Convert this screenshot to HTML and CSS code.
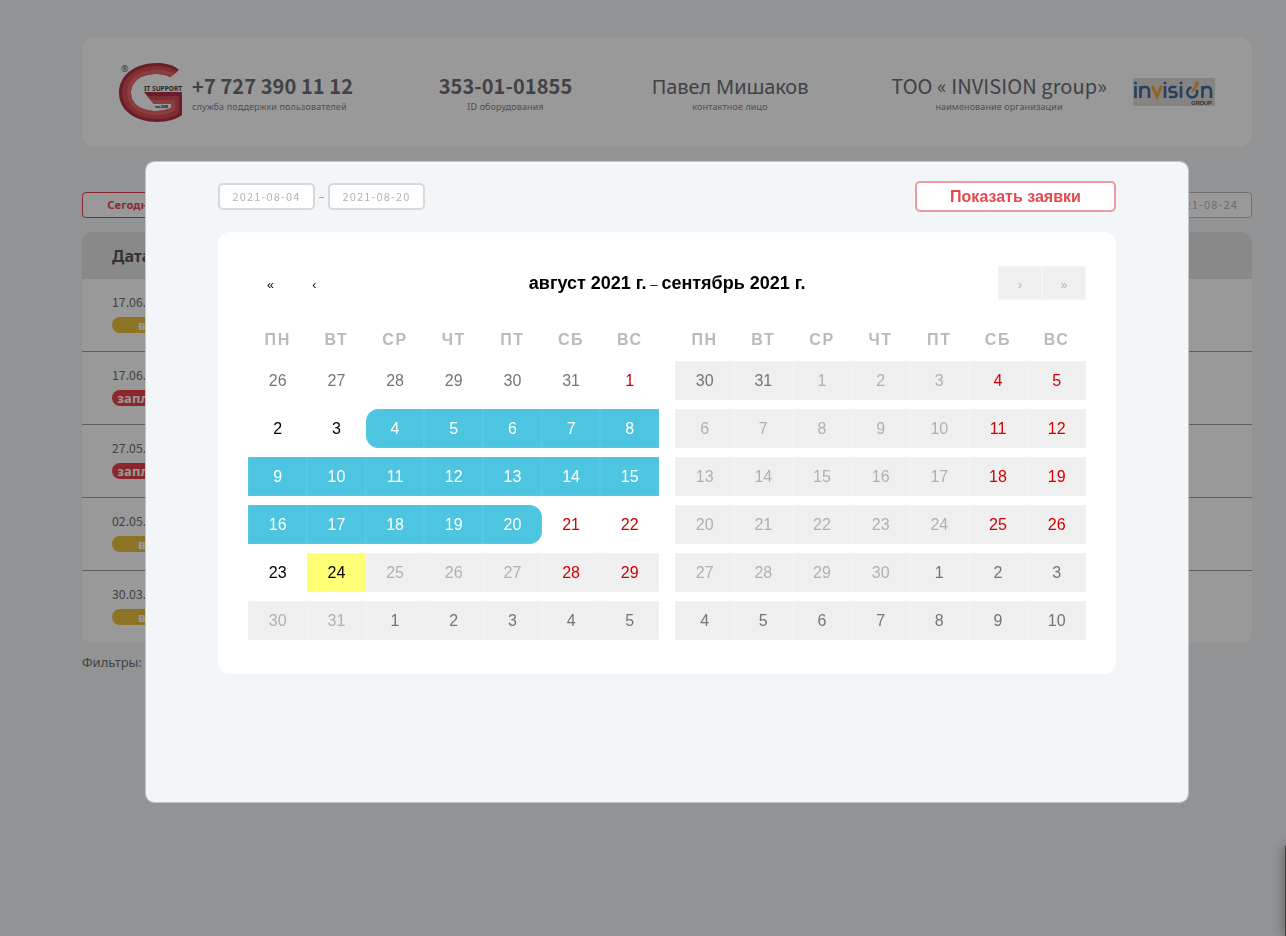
FILE: index.html
```html
<!DOCTYPE html>
<html lang="ru">
<head>
<meta charset="utf-8">
<title>IT Support</title>
<link rel="stylesheet" href="styles.css">
</head>
<body>
<div class="page">
  <header class="top">
    <svg class="logo" viewBox="0 0 65 61" width="65" height="61">
      <path fill="#b22f43" d="M61 8C56 3 48 1 39 1C17 1 1 13 1 31C1 48 17 60 39 60C50 60 59 57 64 53V30H26L36 42H53V46C49 48 44 49 39 49C23 49 13 42 13 31C13 19 23 12 39 12C44 12 49 13 52 15Z"/>
      <path fill="#d05057" d="M59 10C54 6 47 4 39 4C19 4 4 15 4 31C4 46 19 57 39 57C48 57 56 55 61 51V34H29L36 42H53V46C49 48 44 49 39 49C23 49 13 42 13 31C13 19 23 12 39 12C44 12 49 13 52 15Z"/>
      <path fill="#e8666b" d="M57 12C52 9 46 8 39 8C21 8 9 17 9 31C9 44 21 53 39 53C46 53 53 51 57 48V38H33L36 42H53V46C49 48 44 49 39 49C23 49 13 42 13 31C13 19 23 12 39 12C44 12 49 13 52 15Z"/>
      <text class="logo-name" x="26" y="28.500" textLength="38" lengthAdjust="spacingAndGlyphs">IT SUPPORT</text>
      <text class="logo-est" x="37" y="46" textLength="13">est. 2008</text>
      <text class="logo-reg" x="3" y="9.500">®</text>
    </svg>
    <div class="info phone"><b class="value">+7 727 390 11 12</b><small>служба поддержки пользователей</small></div>
    <div class="info device"><b class="value">353-01-01855</b><small>ID оборудования</small></div>
    <div class="info person"><span class="value">Павел Мишаков</span><small>контактное лицо</small></div>
    <div class="info org"><span class="value">ТОО « INVISION group»</span><small>наименование организации</small></div>
    <svg class="brand" viewBox="0 0 82 28" width="82" height="28">
      <rect width="82" height="28" fill="#e0dcd9"/>
      <g fill="none" stroke="#3e6ba6" stroke-width="2.600">
        <path d="M2.500 8V20M7.500 20V8M7.500 13Q7.500 9 12 9Q16 9 16 13V20M32 8V20M43.500 9H39Q36.500 9 36.500 11.500Q36.500 14 39 14H41Q43.500 14 43.500 16.500Q43.500 19 41 19H36M48 8V20M58.500 9.500A5 5 0 1 0 63.500 12M69.500 20V8M69.500 13Q69.500 9 74 9Q78 9 78 13V20"/>
      </g>
      <path d="M19.500 8L24 18.500L28.500 8" fill="none" stroke="#f0a33c" stroke-width="3"/>
      <path d="M59 14L64 7" stroke="#f0a33c" stroke-width="2.500"/>
      <circle cx="64" cy="5.500" r="2" fill="#f0a33c"/>
      <circle cx="2.500" cy="5" r="1.500" fill="#3e6ba6"/><circle cx="32" cy="5" r="1.500" fill="#3e6ba6"/><circle cx="48" cy="5" r="1.500" fill="#3e6ba6"/>
      <text class="brand-group" x="58" y="27" textLength="21">GROUP</text>
    </svg>
  </header>
  <div class="toolbar"><span class="btn-today">Сегодня</span><span class="date-box">2021-08-24</span></div>
  <section class="orders">
    <div class="orders-head">Дата</div>
    <div class="order"><span>17.06.2021</span><b class="tag">в работе</b></div>
    <div class="order"><span>17.06.2021</span><b class="tag planned">запланирована</b></div>
    <div class="order"><span>27.05.2021</span><b class="tag planned">запланирована</b></div>
    <div class="order"><span>02.05.2021</span><b class="tag">в работе</b></div>
    <div class="order"><span>30.03.2021</span><b class="tag">в работе</b></div>
  </section>
  <div class="filters">Фильтры:</div>
</div>
<div class="side-tab"></div>
<div class="overlay">
  <div class="modal">
    <div class="range"><span class="date-box">2021-08-04</span><i class="dash">–</i><span class="date-box">2021-08-20</span><button class="show">Показать заявки</button></div>
    <div class="calendar">
      <div class="nav"><button>«</button><button>‹</button><div class="period">август 2021 г.<span> – </span>сентябрь 2021 г.</div><button class="off">›</button><button class="off">»</button></div>
      <div class="months">
        <div class="month">
          <div class="week names"><b>ПН</b><b>ВТ</b><b>СР</b><b>ЧТ</b><b>ПТ</b><b>СБ</b><b>ВС</b></div>
          <div class="week"><span class="out">26</span><span class="out">27</span><span class="out">28</span><span class="out">29</span><span class="out">30</span><span class="out">31</span><span class="hol">1</span></div>
          <div class="week"><span>2</span><span>3</span><span class="sel first">4</span><span class="sel">5</span><span class="sel">6</span><span class="sel">7</span><span class="sel">8</span></div>
          <div class="week"><span class="sel">9</span><span class="sel">10</span><span class="sel">11</span><span class="sel">12</span><span class="sel">13</span><span class="sel">14</span><span class="sel">15</span></div>
          <div class="week"><span class="sel">16</span><span class="sel">17</span><span class="sel">18</span><span class="sel">19</span><span class="sel last">20</span><span class="hol">21</span><span class="hol">22</span></div>
          <div class="week"><span>23</span><span class="now">24</span><span class="dis">25</span><span class="dis">26</span><span class="dis">27</span><span class="dis hol">28</span><span class="dis hol">29</span></div>
          <div class="week"><span class="dis">30</span><span class="dis">31</span><span class="dis out">1</span><span class="dis out">2</span><span class="dis out">3</span><span class="dis out">4</span><span class="dis out">5</span></div>
        </div>
        <div class="month">
          <div class="week names"><b>ПН</b><b>ВТ</b><b>СР</b><b>ЧТ</b><b>ПТ</b><b>СБ</b><b>ВС</b></div>
          <div class="week"><span class="dis out">30</span><span class="dis out">31</span><span class="dis">1</span><span class="dis">2</span><span class="dis">3</span><span class="dis hol">4</span><span class="dis hol">5</span></div>
          <div class="week"><span class="dis">6</span><span class="dis">7</span><span class="dis">8</span><span class="dis">9</span><span class="dis">10</span><span class="dis hol">11</span><span class="dis hol">12</span></div>
          <div class="week"><span class="dis">13</span><span class="dis">14</span><span class="dis">15</span><span class="dis">16</span><span class="dis">17</span><span class="dis hol">18</span><span class="dis hol">19</span></div>
          <div class="week"><span class="dis">20</span><span class="dis">21</span><span class="dis">22</span><span class="dis">23</span><span class="dis">24</span><span class="dis hol">25</span><span class="dis hol">26</span></div>
          <div class="week"><span class="dis">27</span><span class="dis">28</span><span class="dis">29</span><span class="dis">30</span><span class="dis out">1</span><span class="dis out">2</span><span class="dis out">3</span></div>
          <div class="week"><span class="dis out">4</span><span class="dis out">5</span><span class="dis out">6</span><span class="dis out">7</span><span class="dis out">8</span><span class="dis out">9</span><span class="dis out">10</span></div>
        </div>
      </div>
    </div>
  </div>
</div>
</body>
</html>
```
FILE: styles.css
```css
* { box-sizing: border-box; }
body { margin: 0; height: 936px; overflow: hidden; background: #f2f5f9; color: #6b6e75; font-family: "Noto Sans", sans-serif; }
.page { width: 1170px; margin-left: 82px; padding-top: 37px; }
.top { display: flex; height: 110px; padding: 25px 36px 0; background: #fff; border-radius: 12px; }
.logo { flex: none; margin-right: 9px; }
.logo-name { font: bold 6.500px "Noto Sans", sans-serif; fill: #444; }
.logo-est { font: bold 4px "Noto Sans", sans-serif; fill: #444; }
.logo-reg { font: 9px "Noto Sans", sans-serif; fill: #555; }
.info { flex: none; display: flex; flex-direction: column; align-items: center; white-space: nowrap; padding-top: 11px; }
.value { font-family: "Noto Sans CJK SC", sans-serif; font-size: 20px; line-height: 26px; margin-bottom: 2px; letter-spacing: .08px; color: #6b6e75; }
.info small { font-size: 9px; line-height: 12px; letter-spacing: .12px; color: #85868a; }
.phone { width: 160px; align-items: flex-start; margin-right: 87px; }
.device { width: 133px; margin-right: 80px; }
.person { width: 156px; margin-right: 83px; }
.person .value { font-family: "Noto Sans", sans-serif; font-size: 20px; line-height: 28px; margin: 0; letter-spacing: -.1px; }
.org { width: 216px; margin-right: 26px; }
.brand { flex: none; margin-top: 16px; }
.brand-group { font: bold 6px "Liberation Sans", sans-serif; fill: #555; }
.toolbar { display: flex; justify-content: space-between; margin-top: 45px; height: 26px; }
.btn-today { width: 98px; border: 1px solid #e6404a; border-radius: 4px; background: #fff; color: #e04a52; font-size: 11.300px; font-weight: bold; line-height: 24px; text-align: center; }
.date-box { width: 96px; height: 26px; border: 1px solid #bbb; border-radius: 4px; background: #fff; color: #b3b3b3; font: 11px/23px "Noto Sans CJK SC", sans-serif; letter-spacing: 1.150px; text-align: center; }
.orders { margin-top: 14px; background: #fff; border-radius: 10px; overflow: hidden; height: 411px; }
.orders-head { height: 47px; padding-left: 30px; background: #e5e5e5; color: #555; font-size: 16px; font-weight: bold; line-height: 48px; }
.order { height: 73px; padding: 13px 30px; border-bottom: 1px solid #999; font: 12.300px/21px "Noto Sans CJK SC", sans-serif; display: flex; flex-direction: column; gap: 4px; color: #6b6e75; }
.order:last-child { border: 0; }
.tag { width: 116px; height: 16px; border-radius: 8px; background: #ecc03c; color: #fff; font: bold 13px/17px "Noto Sans", sans-serif; letter-spacing: .850px; text-align: center; }
.planned { background: #e6404a; letter-spacing: .100px; }
.filters { margin-top: 10px; font-size: 13px; line-height: 18px; }
.side-tab { position: fixed; left: 1285px; top: 846px; width: 40px; height: 90px; background: #666; box-shadow: 0 0 12px rgba(0,0,0,.4); }
.overlay { position: fixed; inset: 0; background: rgba(0,0,0,.4); padding: 161px 97px 0 145px; }
.modal { width: 1044px; height: 642px; padding: 19px 73px; border: 1px solid #c3c6c8; border-radius: 9px; background: #f2f6f9; background-clip: padding-box; }
.range { display: flex; align-items: center; height: 31px; margin-left: -1px; width: 898px; }
.range .date-box { border: 2px solid #d8d8d8; border-radius: 5px; height: 27px; width: 97px; line-height: 22px; }
.dash { width: 13px; text-align: center; color: #aaa; font: 12px "Noto Sans", sans-serif; }
.show { margin-left: auto; width: 201px; height: 31px; padding: 0; border: 2px solid #ee9a9e; border-radius: 5px; background: #fff; color: #e6474d; font: bold 16px "Liberation Sans", sans-serif; }
.calendar { width: 897.600px; height: 442px; margin: 20px 0 0 -.600px; padding: 34px 30px 0; border-radius: 12px; background: #fff; font-family: "Liberation Sans", sans-serif; }
.nav { display: flex; height: 34px; }
.nav button { width: 44px; height: 34px; padding: 3px 0 0; border: 0; background: none; color: #000; font: 12.500px "Liberation Sans", sans-serif; }
.nav .off { background: #efefef; color: #b4b4b4; border: 1px solid #f5f5f5; }
.period { flex: 1; text-align: center; font-size: 18px; font-weight: bold; line-height: 34px; color: #000; }
.period span { font-size: 13.333px; font-weight: normal; white-space: pre; }
.months { display: flex; justify-content: space-between; margin-top: 20px; }
.month { width: 410.700px; display: flex; flex-direction: column; gap: 9px; }
.week { display: grid; grid-template-columns: repeat(7, 1fr); height: 39px; text-align: center; font-size: 16px; line-height: 37px; color: #000; }
.week span { border: 1px solid transparent; }
.names { height: 32px; line-height: 40px; color: #bababa; letter-spacing: 1.600px; }
.week .out { color: #757575; }
.week .dis { background: #efefef; border-color: #f2f2f2; color: #b0b0b0; }
.week .dis.out { color: #757575; }
.week .hol, .week .dis.hol { color: #d10000; }
.week .sel { background: #4ec5e0; border-color: #57c8e1; color: #fff; }
.first { border-radius: 12px 0 0 12px; }
.last { border-radius: 0 12px 12px 0; }
.week .now { background: #ffff76; color: #000; border-color: #ffff8e; }
```
